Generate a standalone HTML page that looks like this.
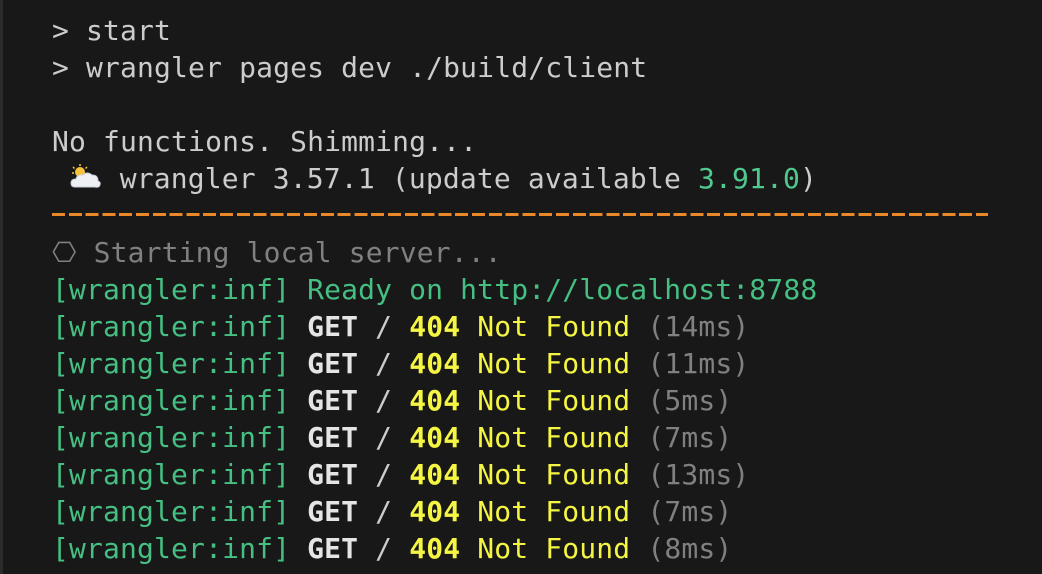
<!DOCTYPE html>
<html><head><meta charset="utf-8"><style>
html,body{margin:0;padding:0;width:1042px;height:574px;overflow:hidden;}
body{background:#181818;position:relative;}
.bar{position:absolute;left:0;top:0;width:3px;height:574px;background:#2b2b2b;}
pre{margin:0;position:absolute;left:52px;top:12px;font-family:"DejaVu Sans Mono","Liberation Mono",monospace;font-size:28px;line-height:37px;color:#cccccc;white-space:pre;letter-spacing:0.15px;}
.g{color:#45bf82}.y{color:#f5f543}.yb{color:#f5f543;font-weight:bold}.w{color:#e5e5e5;font-weight:bold}.d{color:#808080}.n{color:#4ec98f}
.dash{display:inline-block;width:936px;height:3px;vertical-align:9px;background:repeating-linear-gradient(90deg,#e8882a 0 13px,transparent 13px 16.8px);}
.emo{display:inline-block;width:33.7px;height:28px;vertical-align:-5px;}
</style></head><body><div class="bar"></div>
<pre>&gt; start
&gt; wrangler pages dev ./build/client

No functions. Shimming...
 <span class="emo"><svg width="34" height="30" viewBox="0 0 34 30"><circle cx="11" cy="9" r="5" fill="#f6c33a"/><g stroke="#f6c33a" stroke-width="1.5"><line x1="11" y1="1" x2="11" y2="3"/><line x1="4" y1="4" x2="5.5" y2="5.5"/><line x1="18" y1="4" x2="16.5" y2="5.5"/><line x1="3" y1="10" x2="5" y2="10"/></g><path d="M6 24 Q2 24 2 20 Q2 16 7 16 Q8 11 14 12 Q18 8 23 12 Q29 12 29 18 Q32 19 31 22 Q30 25 26 24 Z" fill="#eef0f4" stroke="#c9d0da" stroke-width="1"/></svg></span> wrangler 3.57.1 (update available <span class="n">3.91.0</span>)
<span class="dash"></span>
<span class="d">⎔ Starting local server...</span>
<span class="g">[wrangler:inf] Ready on http://localhost:8788</span>
<span class="g">[wrangler:inf]</span> <span class="w">GET</span> / <span class="yb">404</span> <span class="y">Not Found</span> <span class="d">(14ms)</span>
<span class="g">[wrangler:inf]</span> <span class="w">GET</span> / <span class="yb">404</span> <span class="y">Not Found</span> <span class="d">(11ms)</span>
<span class="g">[wrangler:inf]</span> <span class="w">GET</span> / <span class="yb">404</span> <span class="y">Not Found</span> <span class="d">(5ms)</span>
<span class="g">[wrangler:inf]</span> <span class="w">GET</span> / <span class="yb">404</span> <span class="y">Not Found</span> <span class="d">(7ms)</span>
<span class="g">[wrangler:inf]</span> <span class="w">GET</span> / <span class="yb">404</span> <span class="y">Not Found</span> <span class="d">(13ms)</span>
<span class="g">[wrangler:inf]</span> <span class="w">GET</span> / <span class="yb">404</span> <span class="y">Not Found</span> <span class="d">(7ms)</span>
<span class="g">[wrangler:inf]</span> <span class="w">GET</span> / <span class="yb">404</span> <span class="y">Not Found</span> <span class="d">(8ms)</span>
<span class="g">[wrangler:inf]</span> <span class="w">GET</span> / <span class="yb">404</span> <span class="y">Not Found</span> <span class="d">(7ms)</span></pre>
</body></html>
